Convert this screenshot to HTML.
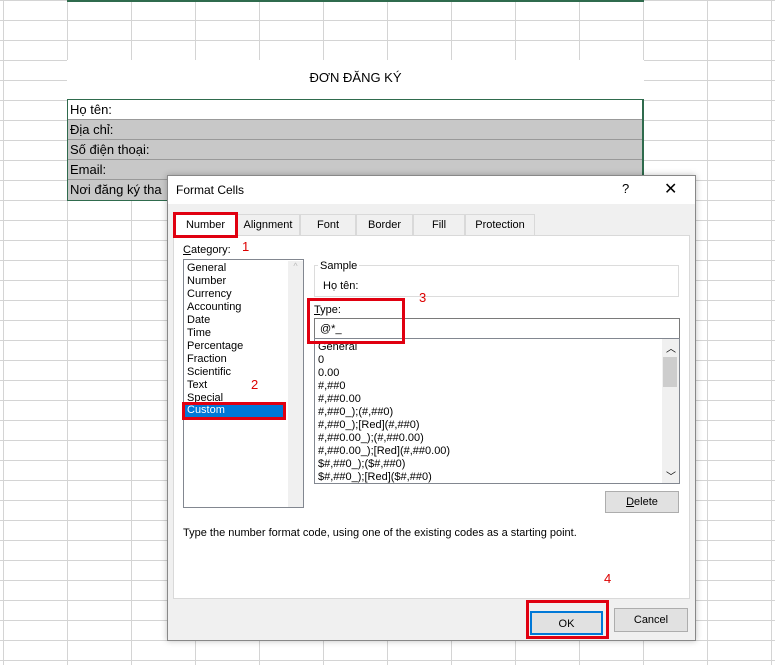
<!DOCTYPE html>
<html><head><meta charset="utf-8"><style>
*{margin:0;padding:0;box-sizing:border-box}
body{width:775px;height:665px;overflow:hidden;background:#fff;position:relative;font-family:"Liberation Sans",sans-serif;font-size:11px;color:#000}
.a{position:absolute}
.grid{position:absolute;left:0;top:0;width:775px;height:665px;
background-image:linear-gradient(to right,#d4d4d4 1px,transparent 1px),linear-gradient(to bottom,#d4d4d4 1px,transparent 1px);
background-size:64px 20px,64px 20px;background-position:3px 0,0 0}
.cell{position:absolute;left:68px;width:574px;height:20px;font-size:13px;padding-left:2px;line-height:20px;border-bottom:1px solid #999}
.red{position:absolute;border:3px solid #e00010}
.num{position:absolute;color:#d00;font-size:13px}
.btn{position:absolute;background:#e1e1e1;border:1px solid #adadad;text-align:center;font-size:11px}
.tab{position:absolute;top:214px;height:22px;line-height:20px;text-align:center;border:1px solid #d9d9d9;border-bottom:none;background:#f0f0f0}
</style></head><body>
<div class="grid"></div>
<div class="a" style="left:67px;top:60px;width:577px;height:40px;background:#fff"></div>
<div class="a" style="left:67px;top:0;width:577px;height:2px;background:#2f6b4d"></div>
<div class="a" style="left:67px;top:70px;width:577px;text-align:center;font-size:13px">ĐƠN ĐĂNG KÝ</div>
<div class="a" style="left:67px;top:99px;width:577px;height:102px;border:2px solid #2f6b4d;background:#c8c8c8"></div>
<div class="cell" style="top:100px;background:#fff">Họ tên:</div>
<div class="cell" style="top:120px;background:#c8c8c8">Địa chỉ:</div>
<div class="cell" style="top:140px;background:#c8c8c8">Số điện thoại:</div>
<div class="cell" style="top:160px;background:#c8c8c8">Email:</div>
<div class="cell" style="top:180px;background:#c8c8c8;border:none">Nơi đăng ký tha</div>

<!-- dialog -->
<div class="a" style="left:167px;top:175px;width:529px;height:466px;background:#f0f0f0;border:1px solid #888;box-shadow:0 0 6px rgba(0,0,0,.25)"></div>
<div class="a" style="left:168px;top:176px;width:527px;height:28px;background:#fff"></div>
<div class="a" style="left:176px;top:183px;font-size:12px">Format Cells</div>
<div class="a" style="left:622px;top:181px;font-size:13px">?</div>
<div class="a" style="left:664px;top:179px;font-size:16px">✕</div>

<div class="tab" style="left:236px;width:64px">Alignment</div>
<div class="tab" style="left:300px;width:56px">Font</div>
<div class="tab" style="left:356px;width:57px">Border</div>
<div class="tab" style="left:413px;width:52px">Fill</div>
<div class="tab" style="left:465px;width:70px">Protection</div>
<div class="a" style="left:173px;top:235px;width:517px;height:364px;background:#fff;border:1px solid #d9d9d9"></div>
<div class="tab" style="left:175px;top:212px;width:61px;height:25px;background:#fff;line-height:24px">Number</div>
<div class="red" style="left:173px;top:212px;width:65px;height:26px"></div>

<div class="a" style="left:183px;top:244px"><u>C</u>ategory:</div>
<div class="num" style="left:242px;top:239px">1</div>
<div class="a" style="left:183px;top:259px;width:121px;height:249px;border:1px solid #828790;background:#fff"></div>
<div class="a" style="left:288px;top:261px;width:15px;height:246px;background:#f0f0f0;color:#bbb;font-size:9px;text-align:center">^</div>
<div class="a" style="left:187px;top:262px;line-height:13px">General<br>Number<br>Currency<br>Accounting<br>Date<br>Time<br>Percentage<br>Fraction<br>Scientific<br>Text<br>Special</div>
<div class="a" style="left:185px;top:404px;width:100px;height:13px;background:#0078d7;color:#fff;padding-left:2px;line-height:13px">Custom</div>
<div class="red" style="left:182px;top:402px;width:104px;height:18px"></div>
<div class="num" style="left:251px;top:377px">2</div>

<div class="a" style="left:314px;top:265px;width:365px;height:32px;border:1px solid #dcdcdc"></div>
<div class="a" style="left:318px;top:260px;background:#fff;padding:0 2px">Sample</div>
<div class="a" style="left:323px;top:280px">Họ tên:</div>
<div class="a" style="left:314px;top:304px"><u>T</u>ype:</div>
<div class="num" style="left:419px;top:290px">3</div>
<div class="a" style="left:314px;top:318px;width:366px;height:21px;border:1px solid #7a7a7a;padding:4px 5px">@*_</div>
<div class="a" style="left:314px;top:338px;width:366px;height:146px;border:1px solid #828790;background:#fff;overflow:hidden"></div>
<div class="a" style="left:318px;top:341px;line-height:13px">General<br>0<br>0.00<br>#,##0<br>#,##0.00<br>#,##0_);(#,##0)<br>#,##0_);[Red](#,##0)<br>#,##0.00_);(#,##0.00)<br>#,##0.00_);[Red](#,##0.00)<br>$#,##0_);($#,##0)<br>$#,##0_);[Red]($#,##0)</div>
<div class="a" style="left:662px;top:339px;width:17px;height:144px;background:#f0f0f0"></div>
<div class="a" style="left:663px;top:357px;width:14px;height:30px;background:#cdcdcd"></div>
<div class="a" style="left:666px;top:340px;font-size:10px">︿</div>
<div class="a" style="left:666px;top:468px;font-size:10px">﹀</div>
<div class="red" style="left:307px;top:298px;width:98px;height:46px"></div>

<div class="btn" style="left:605px;top:491px;width:74px;height:22px;line-height:20px"><u>D</u>elete</div>
<div class="a" style="left:183px;top:527px">Type the number format code, using one of the existing codes as a starting point.</div>
<div class="num" style="left:604px;top:571px">4</div>
<div class="btn" style="left:530px;top:611px;width:73px;height:24px;line-height:22px;border:2px solid #0078d7">OK</div>
<div class="btn" style="left:614px;top:608px;width:74px;height:24px;line-height:22px">Cancel</div>
<div class="red" style="left:526px;top:600px;width:83px;height:39px"></div>
</body></html>
